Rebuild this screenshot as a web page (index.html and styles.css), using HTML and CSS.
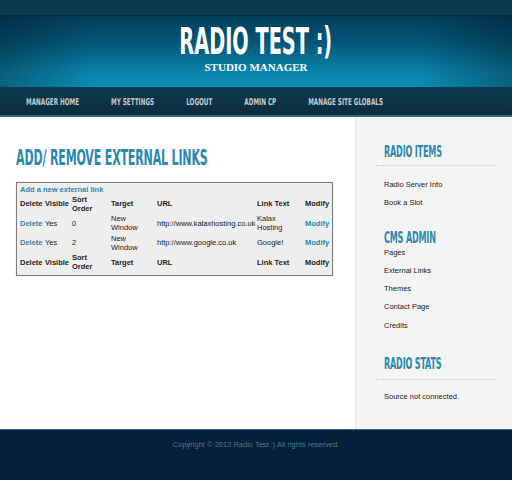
FILE: index.html
```html
<!DOCTYPE html>
<html>
<head>
<meta charset="utf-8">
<link rel="stylesheet" href="styles.css">
</head>
<body>
<div class="topbar"></div>
<header class="masthead">
  <h1 class="site-title"><span>RADIO TEST :)</span></h1>
  <div class="site-sub">STUDIO MANAGER</div>
</header>
<nav class="mainnav">
  <a href="#">MANAGER HOME</a>
  <a href="#">MY SETTINGS</a>
  <a href="#">LOGOUT</a>
  <a href="#">ADMIN CP</a>
  <a href="#">MANAGE SITE GLOBALS</a>
</nav>
<div class="page">
  <main class="content">
    <h2 class="page-title"><span>ADD/ REMOVE EXTERNAL LINKS</span></h2>
    <table class="links">
      <colgroup>
        <col class="c1"><col class="c2"><col class="c3"><col class="c4"><col class="c5"><col class="c6"><col class="c7">
      </colgroup>
      <tr class="addrow"><td colspan="7"><a href="#">Add a new external link</a></td></tr>
      <tr class="head"><th>Delete</th><th>Visible</th><th>Sort<br>Order</th><th>Target</th><th>URL</th><th>Link Text</th><th>Modify</th></tr>
      <tr><td><a href="#">Delete</a></td><td>Yes</td><td>0</td><td>New<br>Window</td><td class="url">http://www.kalaxhosting.co.uk</td><td>Kalax<br>Hosting</td><td><a href="#">Modify</a></td></tr>
      <tr><td><a href="#">Delete</a></td><td>Yes</td><td>2</td><td>New<br>Window</td><td class="url">http://www.google.co.uk</td><td>Google!</td><td><a href="#">Modify</a></td></tr>
      <tr class="head"><th>Delete</th><th>Visible</th><th>Sort<br>Order</th><th>Target</th><th>URL</th><th>Link Text</th><th>Modify</th></tr>
    </table>
  </main>
  <aside class="sidebar">
    <h3 class="side-title"><span>RADIO ITEMS</span></h3>
    <div class="rule"></div>
    <ul class="side-list list-radio">
      <li>Radio Server Info</li>
      <li>Book a Slot</li>
    </ul>
    <h3 class="side-title"><span>CMS ADMIN</span></h3>
    <ul class="side-list list-cms">
      <li>Pages</li>
      <li>External Links</li>
      <li>Themes</li>
      <li>Contact Page</li>
      <li>Credits</li>
    </ul>
    <h3 class="side-title"><span>RADIO STATS</span></h3>
    <div class="rule rule-wide"></div>
    <p class="side-text">Source not connected.</p>
  </aside>
</div>
<footer class="footer">Copyright © 2012 Radio Test :) All rights reserved.</footer>
</body>
</html>
```
FILE: styles.css
```css
html, body { margin: 0; padding: 0; }
body {
  width: 512px;
  height: 480px;
  overflow: hidden;
  font-family: "Liberation Sans", Arial, sans-serif;
  background: #02213a;
}
.topbar {
  height: 15px;
  background: #0b3a4f;
  border-bottom: 1px solid #052c3d;
}
.masthead {
  height: 71px;
  box-sizing: border-box;
  padding-top: 10px;
  text-align: center;
  background:
    linear-gradient(to right, rgba(0,20,35,.35) 0%, rgba(0,20,35,0) 18%, rgba(0,20,35,0) 82%, rgba(0,20,35,.35) 100%),
    linear-gradient(to bottom, #023f5c 0%, #045476 35%, #0a84a9 80%, #0b8db3 100%);
}
.site-title {
  margin: 0;
  height: 32px;
  line-height: 32px;
  font-family: "DejaVu Sans Condensed", "DejaVu Sans", sans-serif;
  font-stretch: condensed;
  font-weight: bold;
  font-size: 37px;
  color: #ffffff;
}
.site-title span {
  display: inline-block;
  transform: scaleX(0.58);
  transform-origin: center;
}
.site-sub {
  margin-top: 3px;
  height: 12px;
  line-height: 12px;
  font-family: "Liberation Serif", "DejaVu Serif", serif;
  font-weight: bold;
  font-size: 11px;
  color: #ffffff;
}
.mainnav {
  height: 30px;
  box-sizing: border-box;
  display: flex;
  align-items: center;
  gap: 32px;
  padding-left: 26px;
  background: linear-gradient(to bottom, #0e3a4d 0%, #0b2d3f 100%);
  border-bottom: 2px solid #2b6f80;
}
.mainnav a {
  display: inline-block;
  font-family: "DejaVu Sans Condensed", "DejaVu Sans", sans-serif;
  font-stretch: condensed;
  font-weight: bold;
  font-size: 6.3px;
  color: #c3ccd1;
  text-decoration: none;
  transform: scaleY(1.5);
}
.page {
  display: flex;
  height: 312px;
  background: #ffffff;
}
.content {
  flex: 1;
  padding: 31px 0 0 16px;
}
.page-title {
  margin: 0 0 14px 0;
  height: 20px;
  line-height: 20px;
  font-family: "DejaVu Sans Condensed", "DejaVu Sans", sans-serif;
  font-stretch: condensed;
  font-weight: bold;
  font-size: 21px;
  color: #2c88b0;
  white-space: nowrap;
}
.page-title span {
  display: inline-block;
  transform: scaleX(0.585);
  transform-origin: left center;
  letter-spacing: -0.3px;
}
.links {
  width: 317px;
  box-sizing: border-box;
  table-layout: fixed;
  border-collapse: separate;
  border-spacing: 0;
  padding: 0 0 2.5px 0;
  border: 1px solid #7c7c7c;
  background: #eeeeee;
  font-size: 7.5px;
  color: #222;
  box-shadow: 0 0 1px rgba(0,0,0,.3);
}
.c1 { width: 25px; }
.c2 { width: 27px; }
.c3 { width: 39px; }
.c4 { width: 46px; }
.c5 { width: 100px; }
.c6 { width: 48px; }
.c7 { width: 30px; }
.links td, .links th {
  box-sizing: border-box;
  padding: 0 0 0 3px;
  height: 19.5px;
  line-height: 9px;
  text-align: left;
  vertical-align: middle;
}
.links th { font-weight: bold; }
.links .addrow td { height: 11px; line-height: 9px; padding-top: 1px; }
.links a { color: #2f86b0; text-decoration: none; font-weight: bold; }
.links .url { white-space: nowrap; overflow: visible; }
.sidebar {
  width: 157px;
  box-sizing: border-box;
  background: #f4f4f4;
  border-left: 1px solid #e6e6e6;
  padding: 27px 16px 0 20px;
}
.side-title {
  margin: 0;
  padding-left: 8px;
  height: 16px;
  line-height: 16px;
  font-family: "DejaVu Sans Condensed", "DejaVu Sans", sans-serif;
  font-stretch: condensed;
  font-weight: bold;
  font-size: 16px;
  color: #2c88b0;
  white-space: nowrap;
}
.side-title span {
  display: inline-block;
  transform: scaleX(0.56);
  transform-origin: left center;
  letter-spacing: -0.3px;
}
.rule {
  margin-top: 5px;
  border-top: 1px dotted #c9c9c9;
}
.rule.rule-wide { margin-top: 7px; }
.side-list {
  list-style: none;
  padding: 0 0 0 8px;
}
.side-list.list-radio { margin: 10px 0 17px 0; }
.side-list.list-cms { margin: -2px 0 21px 0; }
.side-list li {
  font-size: 7.5px;
  color: #222;
  height: 18.3px;
  line-height: 18.3px;
}
.side-text {
  margin: 8px 0 0 0;
  padding-left: 8px;
  font-size: 7.5px;
  line-height: 18px;
  color: #222;
}
.footer {
  height: 51px;
  box-sizing: border-box;
  border-top: 1px solid #43677a;
  background: #02213a;
  text-align: center;
  font-size: 7.5px;
  color: #58768a;
  padding-top: 10px;
}
```
